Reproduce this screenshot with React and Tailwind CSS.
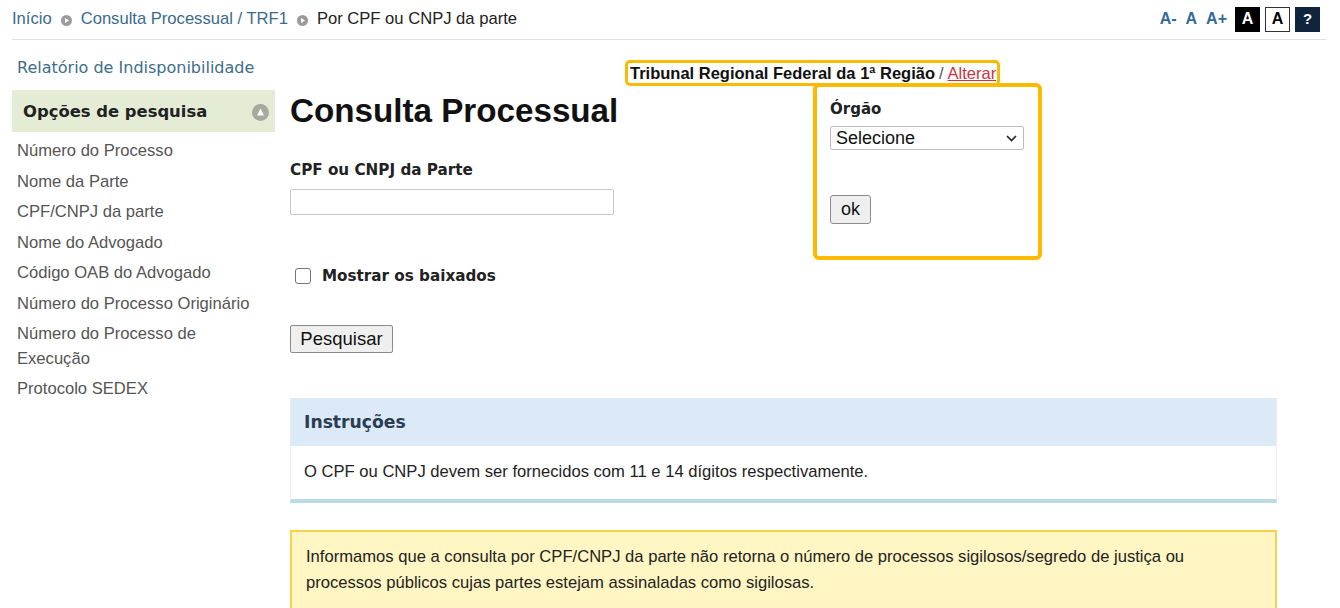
import React from "react";

const arial = { fontFamily: '"Liberation Sans", Arial, sans-serif' };
const verdana = { fontFamily: '"DejaVu Sans", Verdana, sans-serif' };

function Bullet() {
  return (
    <svg width="11" height="11" viewBox="0 0 11 11" className="mx-[9px] mt-[3px]">
      <circle cx="5.5" cy="5.5" r="5.5" fill="#9b9b9b" />
      <path d="M4 3 L8 5.5 L4 8 Z" fill="#fff" />
    </svg>
  );
}

export default function App() {
  const links = [
    "Número do Processo",
    "Nome da Parte",
    "CPF/CNPJ da parte",
    "Nome do Advogado",
    "Código OAB do Advogado",
    "Número do Processo Originário",
    "Número do Processo de Execução",
    "Protocolo SEDEX",
  ];
  return (
    <div className="w-[1340px] h-[608px] overflow-hidden bg-white px-3" style={arial}>
      {/* top bar */}
      <div className="h-[40px] flex items-center justify-between border-b border-[#e3e3e3] mr-[2px]">
        <div className="flex items-center text-[16.6px] leading-[20px] -mt-[2px]">
          <span className="text-[#3b6a8e]">Início</span>
          <Bullet />
          <span className="text-[#3b6a8e]">Consulta Processual / TRF1</span>
          <Bullet />
          <span className="text-[#222]">Por CPF ou CNPJ da parte</span>
        </div>
        <div className="flex items-center gap-[5px] -mt-[1px] pr-[6px]">
          <span className="text-[#336b98] font-bold text-[16px] mr-[4px]">A-</span>
          <span className="text-[#336b98] font-bold text-[16px] mr-[4px]">A</span>
          <span className="text-[#336b98] font-bold text-[16px] mr-[3px]">A+</span>
          <span className="w-[25px] h-[25px] bg-black text-white font-bold text-[16px] flex items-center justify-center">A</span>
          <span className="w-[25px] h-[25px] bg-white border border-[#333] text-black font-bold text-[16px] flex items-center justify-center">A</span>
          <span className="w-[25px] h-[25px] bg-[#10253d] text-white font-bold text-[15px] flex items-center justify-center">?</span>
        </div>
      </div>

      <div className="flex gap-[15px]">
        {/* sidebar */}
        <div className="w-[263px] shrink-0">
          <div className="pt-[18px] pl-[5px] text-[16px] leading-[20px] text-[#3d6d8c]" style={verdana}>
            Relatório de Indisponibilidade
          </div>
          <div className="mt-[12px] h-[42px] bg-[#e4ecd5] flex items-center justify-between pl-[11px] pr-[6px]">
            <span className="font-bold text-[16.4px] text-[#222] mt-[3px]" style={verdana}>Opções de pesquisa</span>
            <svg width="17" height="17" viewBox="0 0 17 17" className="mt-[2px]">
              <circle cx="8.5" cy="8.5" r="8.5" fill="#a5ab9d" />
              <path d="M8.5 4.5 L12 11.5 L5 11.5 Z" fill="#fff" />
            </svg>
          </div>
          <ul className="mt-[4px] pl-[5px] pr-[12px]">
            {links.map((l) => (
              <li key={l} className="text-[16.6px] leading-[24.5px] py-[3px] text-[#555]">
                {l}
              </li>
            ))}
          </ul>
        </div>

        {/* main */}
        <div className="relative w-[987px]">
          <div className="mt-[20px] ml-[335px] inline-flex h-[26px] items-center border-[3px] border-[#fbb900] rounded-[5px] pl-[2px] pr-[1px] text-[16.5px] leading-[18px]">
            <span className="font-bold text-[#111]">Tribunal Regional Federal da 1ª Região</span>
            <span className="text-[#555] mx-[4px]">/</span>
            <span className="text-[#c9343f] underline">Alterar</span>
          </div>
          <h1 className="mt-[7px] text-[33.2px] leading-[36px] font-bold text-[#111]">Consulta Processual</h1>
          <div className="mt-[31px] text-[15.2px] leading-[20px] font-bold text-[#222]" style={verdana}>CPF ou CNPJ da Parte</div>
          <input className="mt-[9px] block w-[324px] h-[26px] border border-[#c8c8c8] rounded-[2px] outline-none" />
          <div className="mt-[51px] flex items-center h-[20px]">
            <span className="ml-[5px] w-[16px] h-[16px] border border-[#767676] rounded-[3px] bg-white"></span>
            <span className="ml-[11px] text-[15.2px] font-bold text-[#222]" style={verdana}>Mostrar os baixados</span>
          </div>
          <button className="mt-[39px] block w-[103px] h-[28px] bg-[#efefef] border border-[#8a8a8a] rounded-[2px] text-[18.5px] text-[#111] leading-[20px]">
            Pesquisar
          </button>
          <div className="mt-[45px] border-x border-[#e6eef2] border-b-[4px] border-b-[#b9dbe1]">
            <div className="h-[48px] bg-[#dce9f6] flex items-center pl-[13px]">
              <span className="font-bold text-[17.2px] text-[#2a3d52] mt-[2px]" style={verdana}>Instruções</span>
            </div>
            <div className="h-[53px] flex items-center pl-[13px] text-[16.6px] text-[#222]">
              O CPF ou CNPJ devem ser fornecidos com 11 e 14 dígitos respectivamente.
            </div>
          </div>
          <div className="mt-[27px] border-2 border-[#f6d44a] bg-[#fff6c3] pt-[12px] pl-[14px] pb-[20px] text-[16.6px] leading-[26px] text-[#222]">
            Informamos que a consulta por CPF/CNPJ da parte não retorna o número de processos sigilosos/segredo de justiça ou
            <br />
            processos públicos cujas partes estejam assinaladas como sigilosas.
          </div>

          {/* Órgão popup */}
          <div className="absolute left-[523px] top-[43px] w-[229px] h-[177px] bg-white border-[4px] border-[#fbb900] rounded-[6px] pl-[13px] pt-[13px]">
            <div className="text-[15px] leading-[18px] font-bold text-[#222]" style={verdana}>Órgão</div>
            <div className="mt-[8px] w-[194px] h-[24px] border border-[#bdbdbd] rounded-[2px] flex items-center justify-between pl-[5px] pr-[6px] text-[18px] text-[#111]">
              <span>Selecione</span>
              <svg width="11" height="7" viewBox="0 0 11 7">
                <path d="M1 1 L5.5 5.5 L10 1" stroke="#222" strokeWidth="1.6" fill="none" />
              </svg>
            </div>
            <button className="mt-[45px] block w-[41px] h-[29px] bg-[#efefef] border border-[#8a8a8a] rounded-[3px] text-[18px] text-[#111]">
              ok
            </button>
          </div>
        </div>
      </div>
    </div>
  );
}
